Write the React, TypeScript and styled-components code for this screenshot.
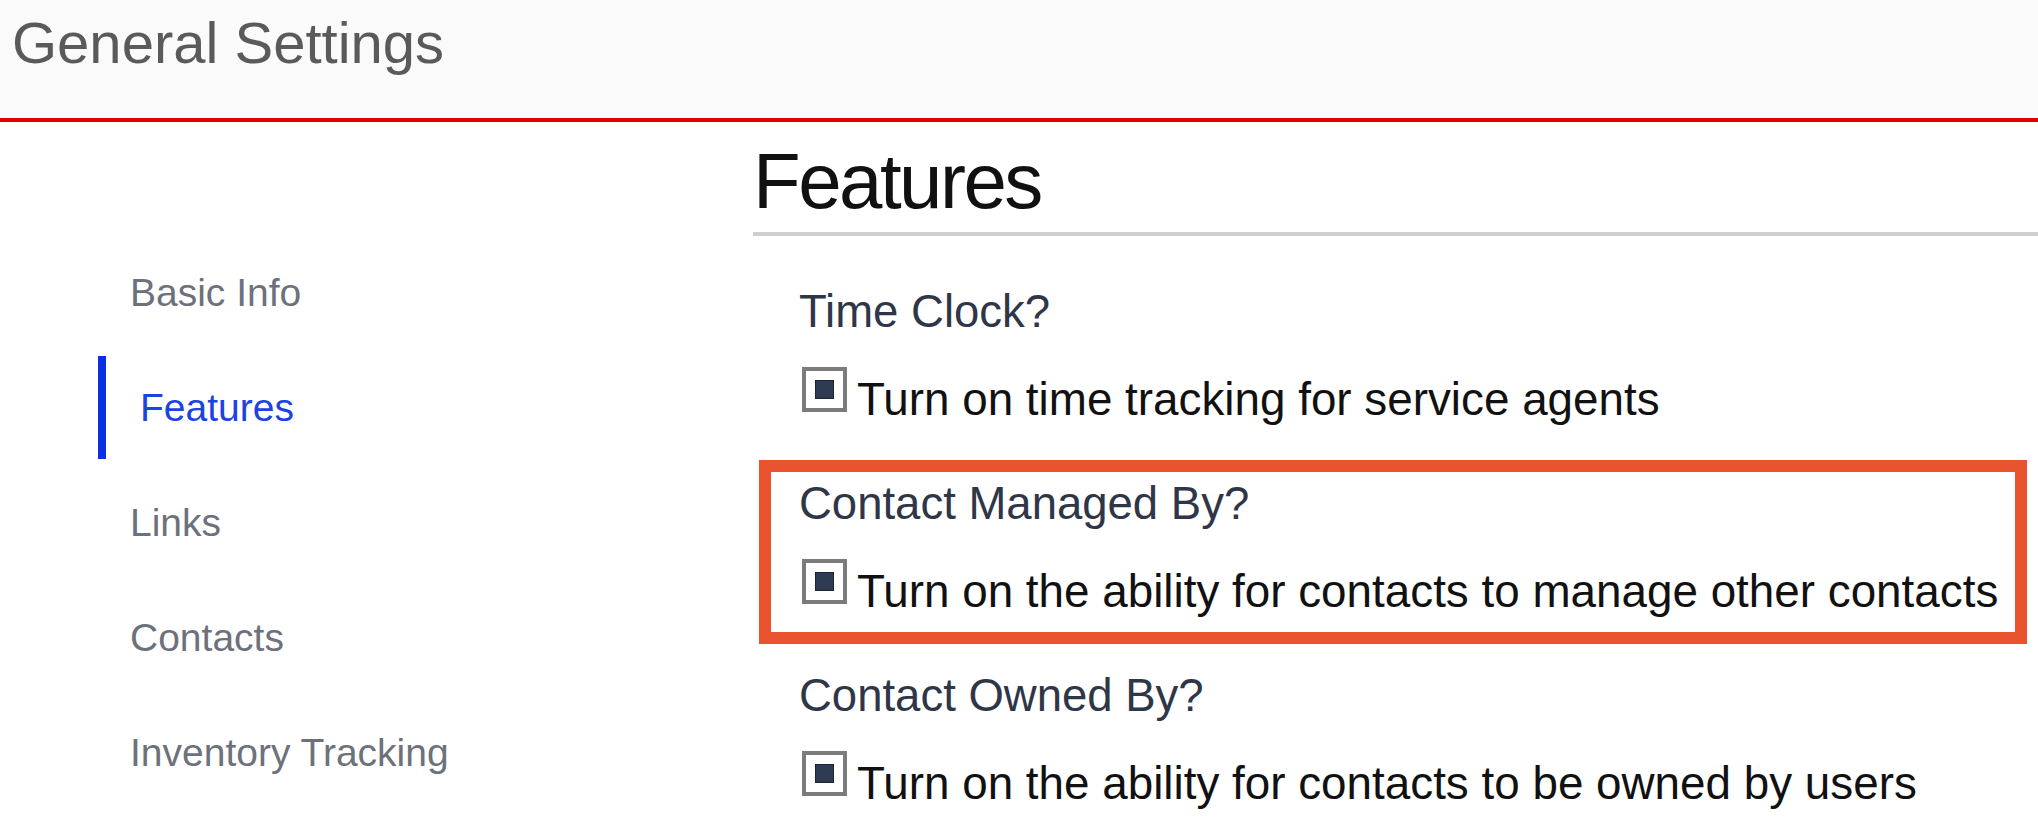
import styled, { createGlobalStyle } from 'styled-components';

const GlobalStyle = createGlobalStyle`
  html, body {
    margin: 0;
    padding: 0;
    background: #ffffff;
    font-family: "Liberation Sans", Arial, sans-serif;
  }
`;

const Page = styled.div`
  width: 2038px;
  min-height: 824px;
  overflow: hidden;
`;

const Header = styled.header`
  height: 122px;
  padding: 14px 0 0 12px;
  box-sizing: border-box;
  background-color: #fafafa;
  border-bottom: 4px solid #e30000;
`;

const HeaderTitle = styled.h1`
  margin: 0;
  font-size: 58px;
  line-height: 1;
  font-weight: 400;
  color: #5a5a5a;
`;

const Body = styled.div`
  display: flex;
`;

const Sidebar = styled.nav`
  width: 753px;
  flex-shrink: 0;
  padding: 119px 0 0 98px;
  box-sizing: border-box;
  display: flex;
  flex-direction: column;
  gap: 12px;
`;

const NavItem = styled.a<{ $active?: boolean }>`
  height: 103px;
  display: flex;
  align-items: center;
  box-sizing: border-box;
  font-size: 39px;
  line-height: 1;
  text-decoration: none;
  color: ${(p) => (p.$active ? '#1c43e2' : '#6d717b')};
  border-left: ${(p) => (p.$active ? '8px solid #0b30e4' : 'none')};
  padding-left: ${(p) => (p.$active ? '34px' : '32px')};
`;

const Main = styled.main`
  flex: 1;
  min-width: 0;
`;

const SectionTitle = styled.h2`
  margin: 20px 0 0;
  padding: 0 0 12px 0;
  font-size: 78px;
  line-height: 1;
  font-weight: 400;
  letter-spacing: -2.5px;
  color: #111111;
  border-bottom: 4px solid #cfcfcf;
`;

const Groups = styled.div`
  margin-top: 32px;
  padding: 0 11px 0 6px;
  display: flex;
  flex-direction: column;
  gap: 8px;
`;

const Group = styled.div<{ $highlighted?: boolean }>`
  border: 12px solid ${(p) => (p.$highlighted ? '#e9542f' : 'transparent')};
  padding: 9px 12px 18px 28px;
`;

const GroupLabel = styled.div`
  font-size: 45.5px;
  line-height: 1;
  color: #2f3647;
`;

const OptionRow = styled.label`
  margin-top: 32.5px;
  display: flex;
  align-items: flex-start;
  gap: 10px;
`;

const CheckBox = styled.span`
  width: 45px;
  height: 45px;
  margin-left: 3px;
  box-sizing: border-box;
  border: 4px solid #7b7b7b;
  background: #ffffff;
  display: flex;
  align-items: center;
  justify-content: center;
  flex-shrink: 0;
`;

const CheckMark = styled.span`
  width: 19px;
  height: 19px;
  box-sizing: border-box;
  background: #2d3b53;
  border: 1px solid #1b2334;
`;

const OptionText = styled.span`
  margin-top: 10px;
  font-size: 45.8px;
  line-height: 45px;
  color: #111111;
  white-space: nowrap;
`;

const navItems = ['Basic Info', 'Features', 'Links', 'Contacts', 'Inventory Tracking'];

const features = [
  { label: 'Time Clock?', option: 'Turn on time tracking for service agents' },
  {
    label: 'Contact Managed By?',
    option: 'Turn on the ability for contacts to manage other contacts',
    highlighted: true,
  },
  { label: 'Contact Owned By?', option: 'Turn on the ability for contacts to be owned by users' },
];

export default function App() {
  return (
    <Page>
      <GlobalStyle />
      <Header>
        <HeaderTitle>General Settings</HeaderTitle>
      </Header>
      <Body>
        <Sidebar>
          {navItems.map((item) => (
            <NavItem key={item} $active={item === 'Features'}>
              {item}
            </NavItem>
          ))}
        </Sidebar>
        <Main>
          <SectionTitle>Features</SectionTitle>
          <Groups>
            {features.map((f) => (
              <Group key={f.label} $highlighted={f.highlighted}>
                <GroupLabel>{f.label}</GroupLabel>
                <OptionRow>
                  <CheckBox>
                    <CheckMark />
                  </CheckBox>
                  <OptionText>{f.option}</OptionText>
                </OptionRow>
              </Group>
            ))}
          </Groups>
        </Main>
      </Body>
    </Page>
  );
}
